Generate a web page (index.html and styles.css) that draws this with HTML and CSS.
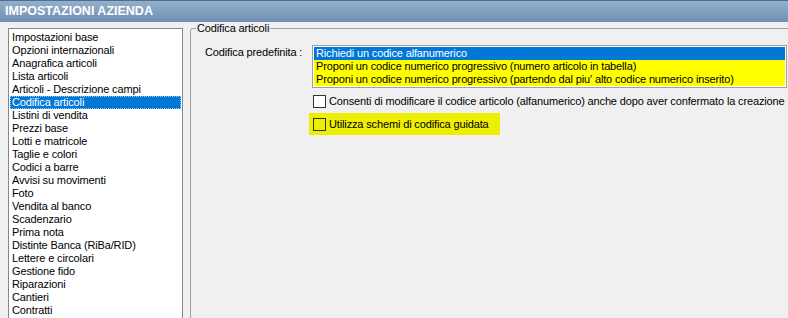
FILE: index.html
```html
<!DOCTYPE html>
<html lang="it">
<head>
<meta charset="utf-8">
<title>Impostazioni azienda</title>
<link rel="stylesheet" href="styles.css">
</head>
<body>
<div class="window">
  <div class="titlebar">IMPOSTAZIONI AZIENDA</div>
  <div class="content">
    <ul class="navlist">
      <li>Impostazioni base</li>
      <li>Opzioni internazionali</li>
      <li>Anagrafica articoli</li>
      <li>Lista articoli</li>
      <li>Articoli - Descrizione campi</li>
      <li class="selected">Codifica articoli</li>
      <li>Listini di vendita</li>
      <li>Prezzi base</li>
      <li>Lotti e matricole</li>
      <li>Taglie e colori</li>
      <li>Codici a barre</li>
      <li>Avvisi su movimenti</li>
      <li>Foto</li>
      <li>Vendita al banco</li>
      <li>Scadenzario</li>
      <li>Prima nota</li>
      <li>Distinte Banca (RiBa/RID)</li>
      <li>Lettere e circolari</li>
      <li>Gestione fido</li>
      <li>Riparazioni</li>
      <li>Cantieri</li>
      <li>Contratti</li>
    </ul>
    <fieldset class="group">
      <legend class="group-title">Codifica articoli</legend>
      <div class="field-row">
        <span class="field-label">Codifica predefinita :</span>
        <ul class="choice-list">
          <li class="choice selected">Richiedi un codice alfanumerico</li>
          <li class="choice marked">Proponi un codice numerico progressivo (numero articolo in tabella)</li>
          <li class="choice marked">Proponi un codice numerico progressivo (partendo dal piu' alto codice numerico inserito)</li>
        </ul>
      </div>
      <div class="options">
        <label class="check-row"><span class="checkbox"></span>Consenti di modificare il codice articolo (alfanumerico) anche dopo aver confermato la creazione</label>
        <label class="check-row highlighted"><span class="checkbox"></span>Utilizza schemi di codifica guidata</label>
      </div>
    </fieldset>
  </div>
</div>
</body>
</html>
```
FILE: styles.css
```css
* { box-sizing: border-box; }

html, body {
  margin: 0;
  padding: 0;
}

body {
  width: 788px;
  height: 318px;
  overflow: hidden;
  background: #f0f0f0;
  font-family: "Liberation Sans", Arial, sans-serif;
  font-size: 11px;
  letter-spacing: -0.14px;
  color: #000;
}

.window {
  width: 788px;
  height: 318px;
  overflow: hidden;
}

.titlebar {
  height: 22px;
  border-top: 1px solid #4f6d8f;
  background: linear-gradient(#93afcc, #6e8eb3);
  color: #fff;
  font-weight: bold;
  font-size: 12.5px;
  line-height: 21px;
  padding-left: 5px;
  letter-spacing: 0;
}

.content {
  display: flex;
  align-items: flex-start;
  padding-top: 6px;
  padding-left: 8px;
  gap: 7px;
}

.navlist {
  list-style: none;
  margin: 0;
  padding: 2px 1px 0 1px;
  width: 175px;
  height: 300px;
  background: #fff;
  border: 1px solid #828790;
  flex: none;
}

.navlist li {
  height: 13px;
  line-height: 13px;
  padding-left: 2px;
  white-space: nowrap;
}

.navlist li.selected {
  background: #0078d7;
  color: #fff;
  outline: 1px dotted #9cc4ea;
  outline-offset: -1px;
}

.group {
  margin: -6px 0 0 0;
  padding: 10px 0 0 0;
  width: 640px;
  height: 300px;
  border: 1px solid #a0a0a0;
  border-radius: 3px;
  flex: none;
}

.group-title {
  padding: 0 1px;
  margin-left: 5px;
  line-height: 13px;
}

.field-row {
  display: flex;
  align-items: flex-start;
  margin-left: 14px;
}

.field-label {
  width: 107px;
  flex: none;
  padding-top: 1px;
  line-height: 13px;
}

.choice-list {
  list-style: none;
  margin: 0;
  padding: 1px;
  width: 475px;
  border: 1px solid #a0a0a0;
  background: #fff;
}

.choice {
  height: 13px;
  line-height: 13px;
  padding-left: 2px;
  white-space: nowrap;
}

.choice.selected {
  background: #0078d7;
  color: #fff;
}

.choice.marked {
  background: #ffff00;
}

.options {
  display: flex;
  flex-direction: column;
  align-items: flex-start;
  margin-left: 118px;
  margin-top: 5px;
  gap: 3px;
}

.check-row {
  display: flex;
  align-items: center;
  height: 17px;
  padding-left: 4px;
  padding-right: 6px;
  white-space: nowrap;
  line-height: 13px;
}

.check-row.highlighted {
  height: 22px;
  width: 191px;
  background: #eeee00;
}

.checkbox {
  width: 13px;
  height: 13px;
  border: 1px solid #333;
  background: #fff;
  margin-right: 3px;
  flex: none;
}

.highlighted .checkbox {
  background: transparent;
}
```
